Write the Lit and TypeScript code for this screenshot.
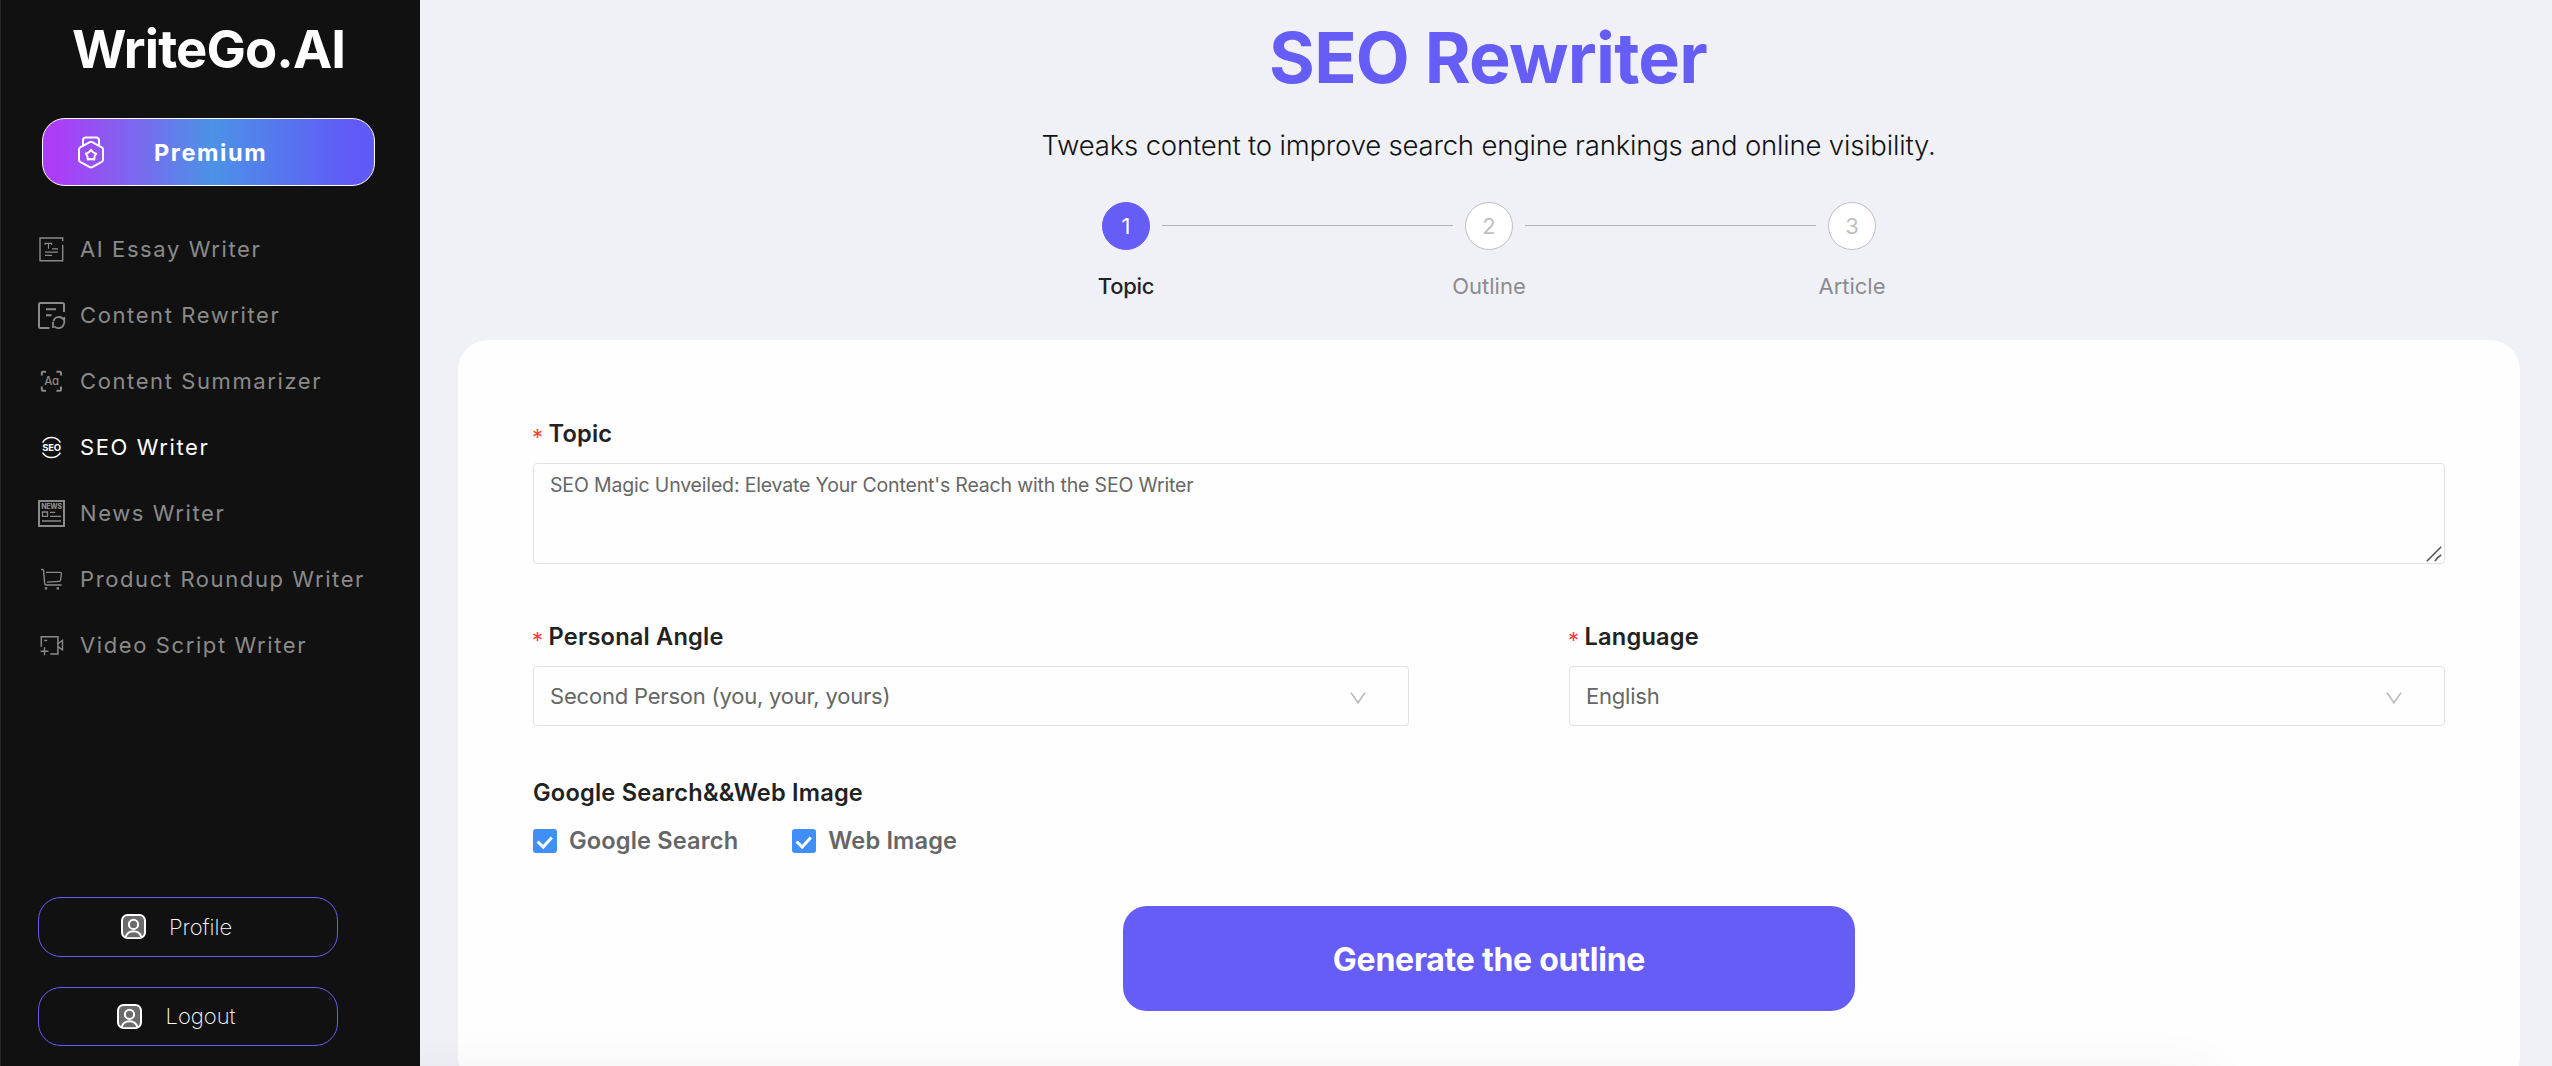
import { LitElement, html, css, svg, nothing } from "lit";
import { classMap } from "lit/directives/class-map.js";

const icons: Record<string, unknown> = {
  essay: svg`
    <path d="M24.7 5.2V2H2v22.8h22.7V8.8" stroke-width="1.4" />
    <path d="M7.2 9V7.4h6.4V9M10.5 7.4v5.4M14 12.8h6M7 16.2h13M7 19.3h7" stroke-width="1.2" />
  `,
  rewrite: svg`
    <path d="M26 10V2.5Q26 1 24.5 1h-22Q1 1 1 2.5v22Q1 26 2.5 26h9" stroke-width="2" />
    <path d="M8 7.2h10M8 13.2h5.5" stroke-width="2" />
    <path d="M15.4 19.2a5.6 5.6 0 0 1 10.3-1.3M26.3 15v6.2M26 21.4a5.6 5.6 0 0 1-9.6 3M15 19.8V26" stroke-width="1.8" />
  `,
  summary: svg`
    <path d="M3.8 7.6V5q0-1.2 1.2-1.2h3M18.4 3.8h3.4Q23 3.8 23 5v2.6M23 18.4v3.2q0 1.2-1.2 1.2h-3.4M8 22.8H5q-1.2 0-1.2-1.2v-3.2" stroke-width="2" />
    <text x="13.5" y="17.4" font-size="11.5" font-weight="500" text-anchor="middle">Aa</text>
  `,
  seo: svg`
    <path d="M4.6 8.6a10.4 10.4 0 0 1 17.8 0M4.6 18.6a10.4 10.4 0 0 0 17.8 0" stroke-width="1.5" />
    <text x="13.5" y="17.3" font-size="9.5" font-weight="700" text-anchor="middle">SEO</text>
  `,
  news: svg`
    <path d="M1 1h25v25H1z" stroke-width="2" />
    <text x="13.5" y="9" font-size="7" font-weight="800" text-anchor="middle">NEWS</text>
    <path d="M4.5 12h5v4.4h-5zM12 12.4h5.2M12 16.3h11M4 21h19" stroke-width="1.3" />
  `,
  cart: svg`
    <path d="M3 3.4h1.4q1 0 1.1 1l1.2 13.2q.1 1.4 1.5 1.4H23.6" stroke-width="1.4" />
    <path d="M8 6.3h14q1.6 0 1.4 1.6l-.8 6q-.2 1.4-1.6 1.5L9 16.2" stroke-width="1.3" />
    <path d="M8 21.2v2.2M19.8 21.2v2.2" stroke-width="2.4" />
  `,
  video: svg`
    <path d="M3.3 14.8V4.7h16.6v17.2h-7.6" stroke-width="1.5" />
    <path d="M19.9 11.8l4.6-3.4v9.4l-4.6-3.2M6.2 8.5h3M2.6 19.3h7.8M6.5 15.3v8" stroke-width="1.4" />
  `,
};

class MenuIcon extends LitElement {
  static properties = {
    name: { type: String },
  };

  static styles = css`
    :host {
      display: block;
      width: 27px;
      height: 27px;
    }
    svg {
      display: block;
      overflow: visible;
      fill: none;
      stroke: currentColor;
    }
    text {
      fill: currentColor;
      stroke: none;
      font-family: Inter, sans-serif;
      font-feature-settings: "cv11";
      letter-spacing: -0.3px;
    }
  `;

  declare name: string;

  render() {
    return html`<svg width="27" height="27" viewBox="0 0 27 27">${icons[this.name]}</svg>`;
  }
}
customElements.define("menu-icon", MenuIcon);

const menu = [
  { icon: "essay", label: "AI Essay Writer" },
  { icon: "rewrite", label: "Content Rewriter" },
  { icon: "summary", label: "Content Summarizer" },
  { icon: "seo", label: "SEO Writer", active: true },
  { icon: "news", label: "News Writer" },
  { icon: "cart", label: "Product Roundup Writer" },
  { icon: "video", label: "Video Script Writer" },
];

class AppSidebar extends LitElement {
  static styles = css`
    :host {
      display: flex;
      flex-direction: column;
      box-sizing: border-box;
      width: 420px;
      height: 100%;
      padding: 20px 0;
      background: #111;
      border-left: 1px solid #262626;
      font-family: Inter, sans-serif;
      color: #fff;
    }
    .logo {
      padding-left: 71px;
      font-size: 52.5px;
      line-height: 58px;
      font-weight: 700;
      letter-spacing: -0.85px;
    }
    .premium {
      display: flex;
      align-items: center;
      gap: 50px;
      box-sizing: border-box;
      width: 333px;
      height: 68px;
      margin: 40px 0 30px 41px;
      padding-left: 35px;
      border: 1px solid #fff;
      border-radius: 23px;
      background: linear-gradient(90deg, #ac3cf7 4%, #4c92e6 51%, #6159f7 94%) border-box;
      font-size: 23.5px;
      font-weight: 700;
      letter-spacing: 1.6px;
    }
    .premium svg {
      display: block;
      fill: none;
      stroke: #fff;
      stroke-linejoin: round;
    }
    .item {
      display: flex;
      align-items: center;
      gap: 15px;
      height: 66px;
      padding-left: 37px;
      color: #8a8a8a;
      font-size: 22px;
      font-weight: 400;
      letter-spacing: 1.6px;
      white-space: nowrap;
    }
    .item.active {
      color: #fff;
    }
    .footer {
      display: flex;
      flex-direction: column;
      gap: 30px;
      margin: auto 0 0 37px;
    }
    .account {
      display: flex;
      align-items: center;
      justify-content: center;
      gap: 23px;
      box-sizing: border-box;
      width: 300px;
      height: 59.5px;
      border: 1px solid #655df5;
      border-radius: 23px;
      font-size: 22px;
      font-weight: 200;
    }
    .account span {
      margin-right: 23px;
    }
  `;

  renderAccount(label: string) {
    return html`
      <div class="account">
        <svg width="25" height="25" viewBox="0 0 25 25" fill="#6b6b6b" stroke="#fff" stroke-width="2">
          <rect x="1" y="1" width="23" height="23" rx="5.5" />
          <path d="M4.6 23.2q1.6-6 7.9-6t7.9 6" />
          <circle cx="12.5" cy="10.4" r="4.6" />
        </svg>
        <span>${label}</span>
      </div>
    `;
  }

  render() {
    return html`
      <div class="logo">WriteGo.AI</div>
      <div class="premium">
        <svg width="26" height="33" viewBox="0 0 26 33" stroke-width="2">
          <path d="M5 9.4V4.2Q5 1.4 7.8 1.4h10.4Q21 1.4 21 4.2v5.2" />
          <path d="M11.8 6.2q1.2-.7 2.4 0l9.6 5.2q1.2.7 1.2 2v10.4q0 1.3-1.2 2l-9.6 5.3q-1.2.7-2.4 0l-9.6-5.3q-1.2-.7-1.2-2V13.4q0-1.3 1.2-2z" />
          <path d="M13 13.9l2.2 2.5 3 1.2-1.6 2.7-.4 3.3-3.2-.7-3.2.7-.4-3.3-1.6-2.7 3-1.2z" />
        </svg>
        <span>Premium</span>
      </div>
      <nav>
        ${menu.map(
          (item) => html`
            <div class=${classMap({ item: true, active: !!item.active })}>
              <menu-icon name=${item.icon}></menu-icon>
              <span>${item.label}</span>
            </div>
          `
        )}
      </nav>
      <div class="footer">${this.renderAccount("Profile")} ${this.renderAccount("Logout")}</div>
    `;
  }
}
customElements.define("app-sidebar", AppSidebar);

class AppSteps extends LitElement {
  static styles = css`
    :host {
      display: flex;
      justify-content: center;
      gap: 12px;
      font-family: Inter, sans-serif;
      font-size: 22px;
    }
    .step {
      display: flex;
      flex-direction: column;
      align-items: center;
      width: 48px;
      color: #8c8c8e;
    }
    .dot {
      display: flex;
      align-items: center;
      justify-content: center;
      box-sizing: border-box;
      width: 48px;
      height: 48px;
      margin-bottom: 21px;
      border: 1px solid #bfbfbf;
      border-radius: 50%;
      background: #fff;
      color: #bfbfbf;
    }
    .label {
      line-height: 30px;
    }
    .current .dot {
      background: #655df5;
      border-color: #655df5;
      color: #fff;
    }
    .current .label {
      color: #222;
      font-weight: 500;
      letter-spacing: -0.3px;
    }
    .line {
      width: 291px;
      height: 1px;
      margin-top: 23px;
      background: #b3b4b7;
    }
  `;

  render() {
    return html`${["Topic", "Outline", "Article"].map(
      (label, i) => html`
        ${i ? html`<div class="line"></div>` : nothing}
        <div class=${classMap({ step: true, current: i === 0 })}>
          <div class="dot">${i + 1}</div>
          <div class="label">${label}</div>
        </div>
      `
    )}`;
  }
}
customElements.define("app-steps", AppSteps);

class AppRoot extends LitElement {
  static styles = css`
    :host {
      display: flex;
      width: 2552px;
      height: 1066px;
      overflow: hidden;
      background: #f0f1f6;
      font-family: Inter, sans-serif;
      color: #222;
    }
    main {
      position: relative;
      flex: 1;
      display: flex;
      flex-direction: column;
      box-sizing: border-box;
      padding: 13px 32px 0 38px;
      overflow: hidden;
      text-align: center;
    }
    /* soft shade rising from below the bottom edge */
    main::after {
      content: "";
      position: absolute;
      top: 1078px;
      left: -100px;
      width: 1890px;
      height: 100px;
      box-shadow: 0 0 60px rgba(0, 0, 0, 0.065);
    }
    h1 {
      margin: 0 2px 0 0;
      color: #655df5;
      font-size: 70px;
      line-height: 90px;
      font-weight: 700;
      letter-spacing: -0.8px;
    }
    .subtitle {
      margin: 22px 1px 37px 0;
      font-size: 27.5px;
      line-height: 40px;
      font-weight: 300;
      letter-spacing: -0.19px;
      color: #111;
    }
    .card {
      flex: none;
      box-sizing: border-box;
      height: 747px;
      margin-top: 39px;
      padding: 79px 75px 0;
      border-radius: 30px;
      background: #fefefe;
      text-align: left;
    }
    .label {
      display: flex;
      height: 30px;
      margin-bottom: 14px;
      font-size: 23.6px;
      line-height: 30px;
      font-weight: 600;
      letter-spacing: 0.2px;
    }
    .required::before {
      content: "*";
      width: 16.5px;
      margin-left: -1px;
      padding-top: 3px;
      color: #f5413f;
      font-size: 22px;
      font-weight: 400;
    }
    .field {
      box-sizing: border-box;
      border: 1px solid #e2e2e4;
      border-radius: 4px;
      color: #666;
    }
    .topic {
      position: relative;
      height: 101px;
      padding: 6px 16px;
      font-size: 19.5px;
      line-height: 31px;
      letter-spacing: -0.17px;
    }
    .topic svg {
      position: absolute;
      right: 2px;
      bottom: 1px;
    }
    .row {
      display: grid;
      grid-template-columns: 1fr 1fr;
      gap: 160px;
      margin: 58px 0 52px;
    }
    .select {
      display: flex;
      align-items: center;
      justify-content: space-between;
      height: 60px;
      padding: 0 42px 0 16px;
      font-size: 22px;
      letter-spacing: -0.2px;
    }
    .select svg {
      margin-top: 4px;
    }
    .checks {
      display: flex;
      gap: 54px;
      margin: 21px 0 53px;
    }
    .check {
      display: flex;
      align-items: center;
      gap: 12px;
      height: 24px;
      color: #666;
      font-size: 23.6px;
      line-height: 24px;
      font-weight: 600;
      letter-spacing: 0.15px;
    }
    .box {
      width: 24px;
      height: 24px;
      border-radius: 3px;
      background: #3f8ff7;
    }
    .submit {
      display: block;
      width: 732px;
      height: 105px;
      margin: 0 auto;
      padding: 1px 0 0;
      border: none;
      border-radius: 24px;
      background: #655df5;
      color: #fff;
      font: 700 32px Inter, sans-serif;
      letter-spacing: -0.25px;
    }
  `;

  renderSelect(label: string, value: string) {
    return html`
      <div>
        <div class="label required">${label}</div>
        <div class="field select">
          <span>${value}</span>
          <svg width="16" height="12" viewBox="0 0 16 12" fill="none" stroke="#b8b8b8" stroke-width="1.5">
            <path d="M1 .8l7 10L15 .8" />
          </svg>
        </div>
      </div>
    `;
  }

  renderCheck(label: string) {
    return html`
      <div class="check">
        <svg class="box" viewBox="0 0 24 24" fill="none" stroke="#fff" stroke-width="3">
          <path d="M4.6 12.5l5.6 5.5 8.6-9.4" />
        </svg>
        <span>${label}</span>
      </div>
    `;
  }

  render() {
    return html`
      <app-sidebar></app-sidebar>
      <main>
        <h1>SEO Rewriter</h1>
        <div class="subtitle">
          Tweaks content to improve search engine rankings and online visibility.
        </div>
        <app-steps></app-steps>
        <div class="card">
          <div class="label required">Topic</div>
          <div class="field topic">
            SEO Magic Unveiled: Elevate Your Content's Reach with the SEO Writer
            <svg width="16" height="16" viewBox="0 0 16 16" fill="none" stroke="#555" stroke-width="1.6">
              <path d="M.8 15.2L15.2.8M9 15.2q2-4 6.2-6.2" />
            </svg>
          </div>
          <div class="row">
            ${this.renderSelect("Personal Angle", "Second Person (you, your, yours)")}
            ${this.renderSelect("Language", "English")}
          </div>
          <div class="label">Google Search&&Web Image</div>
          <div class="checks">
            ${this.renderCheck("Google Search")} ${this.renderCheck("Web Image")}
          </div>
          <button class="submit">Generate the outline</button>
        </div>
      </main>
    `;
  }
}
customElements.define("app-root", AppRoot);
